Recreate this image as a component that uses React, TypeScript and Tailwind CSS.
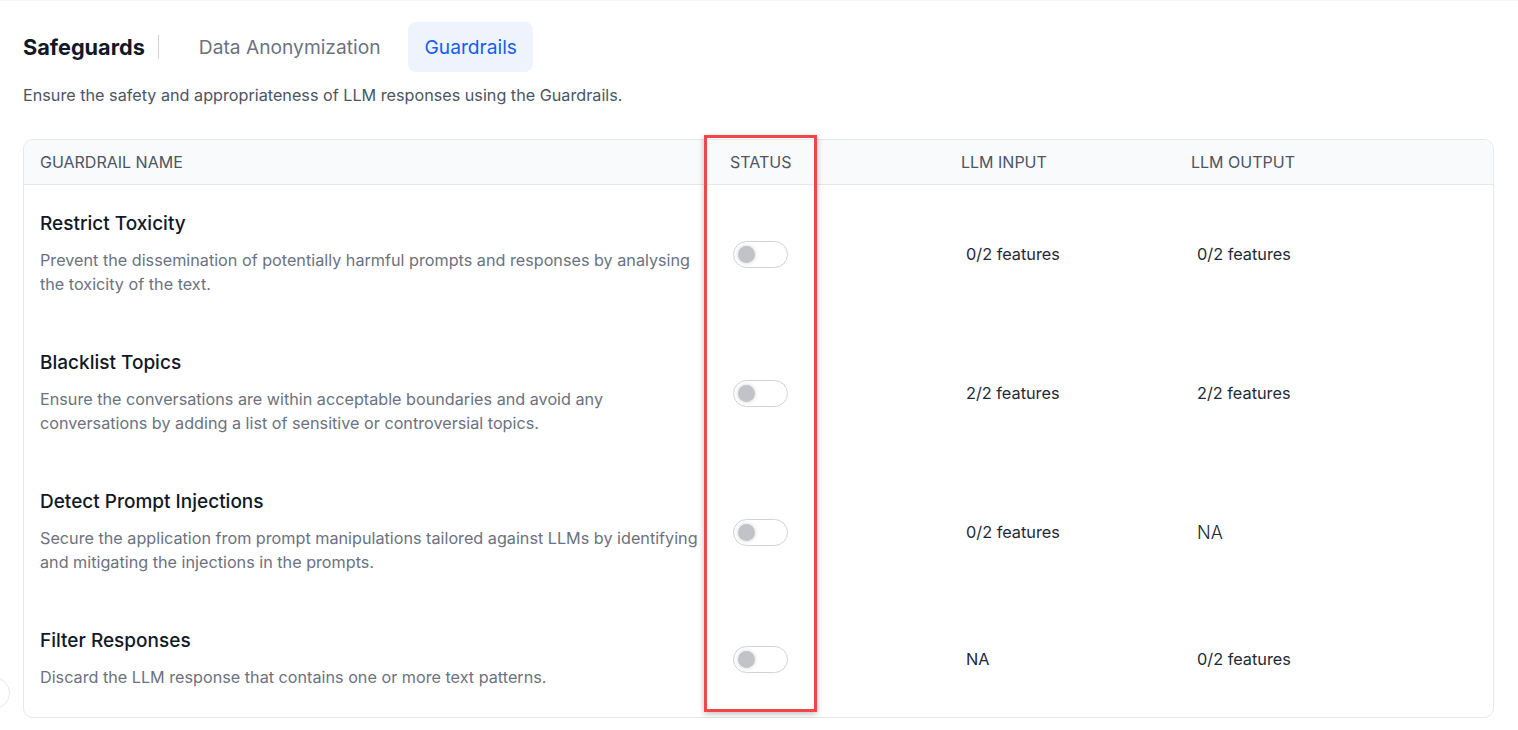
import { useState } from "react";

type Guardrail = {
  name: string;
  description: string;
  input: string;
  output: string;
};

const guardrails: Guardrail[] = [
  {
    name: "Restrict Toxicity",
    description:
      "Prevent the dissemination of potentially harmful prompts and responses by analysing the toxicity of the text.",
    input: "0/2 features",
    output: "0/2 features",
  },
  {
    name: "Blacklist Topics",
    description:
      "Ensure the conversations are within acceptable boundaries and avoid any conversations by adding a list of sensitive or controversial topics.",
    input: "2/2 features",
    output: "2/2 features",
  },
  {
    name: "Detect Prompt Injections",
    description:
      "Secure the application from prompt manipulations tailored against LLMs by identifying and mitigating the injections in the prompts.",
    input: "0/2 features",
    output: "NA",
  },
  {
    name: "Filter Responses",
    description: "Discard the LLM response that contains one or more text patterns.",
    input: "NA",
    output: "0/2 features",
  },
];

const Toggle = ({ on, onClick }: { on: boolean; onClick: () => void }) => (
  <button
    onClick={onClick}
    className={`flex h-[27px] w-[55px] items-center rounded-full border px-[4px] ${
      on ? "border-blue-600 bg-blue-600" : "border-[#cfd2d8] bg-white"
    }`}
  >
    <span
      className={`h-[17px] w-[17px] rounded-full shadow-[0_0_4px_rgba(0,0,0,0.18)] ${
        on ? "ml-auto bg-white" : "bg-[#c1c3c8]"
      }`}
    />
  </button>
);

export default function App() {
  const [enabled, setEnabled] = useState<boolean[]>([false, false, false, false]);

  return (
    <div
      className="relative min-h-screen border-t border-gray-100 bg-white pl-[23px] pr-[24px] pt-[21px]"
      style={{ fontFamily: "Inter, 'Noto Sans', sans-serif" }}
    >
      {/* Title + tabs */}
      <div className="flex items-center">
        <h1 className="text-[21.7px] font-bold text-[#111827]">Safeguards</h1>
        <div className="ml-[13px] h-[24px] w-px bg-gray-300" />
        <button className="ml-[24px] flex h-[50px] items-center rounded-lg px-4 text-[19.2px] text-[#6b7280]">
          Data Anonymization
        </button>
        <button className="ml-[12px] flex h-[50px] items-center rounded-lg bg-[#eef3fe] px-4 text-[19.2px] text-[#155eef]">
          Guardrails
        </button>
      </div>

      <p className="mt-[12px] text-[16.2px] leading-[22px] text-[#4b5563]">
        Ensure the safety and appropriateness of LLM responses using the Guardrails.
      </p>

      {/* Table */}
      <div className="mt-[33px] overflow-hidden rounded-[10px] border border-gray-200">
        <div className="grid h-[45px] grid-cols-[690px_231px_230px_1fr] items-center border-b border-gray-200 bg-[#f9fafb] text-[16px] uppercase text-[#4b5563]">
          <div className="pl-4">Guardrail Name</div>
          <div className="pl-4">Status</div>
          <div className="pl-4">LLM Input</div>
          <div className="pl-4">LLM Output</div>
        </div>

        {guardrails.map((g, i) => (
          <div key={g.name} className="grid grid-cols-[690px_231px_230px_1fr] items-center">
            <div className="pb-[28px] pl-4 pr-2 pt-[29px]">
              <div className="text-[19px] font-medium leading-[20px] text-[#111827]">{g.name}</div>
              <div className="mt-[14px] text-[16.2px] leading-[24px] text-[#6b7280]">{g.description}</div>
            </div>
            <div className="pl-[19px]">
              <Toggle
                on={enabled[i]}
                onClick={() => setEnabled(enabled.map((v, j) => (j === i ? !v : v)))}
              />
            </div>
            <div className="pl-[21px] text-[16.3px] text-[#1f2937]">{g.input}</div>
            <div
              className={`pl-[22px] text-[#1f2937] ${
                g.output === "NA" ? "text-[18px] font-light" : "text-[16.3px]"
              }`}
            >
              {g.output}
            </div>
          </div>
        ))}
      </div>

      {/* annotation box over the status column */}
      <div className="pointer-events-none absolute left-[704px] top-[134px] h-[577px] w-[113px] border-[3px] border-[#f04646] shadow-[0_2px_6px_rgba(0,0,0,0.25)]" />

      {/* collapsed side button peeking in */}
      <div className="absolute left-[-22px] top-[676px] h-8 w-8 rounded-full border border-gray-200 bg-white" />
    </div>
  );
}
